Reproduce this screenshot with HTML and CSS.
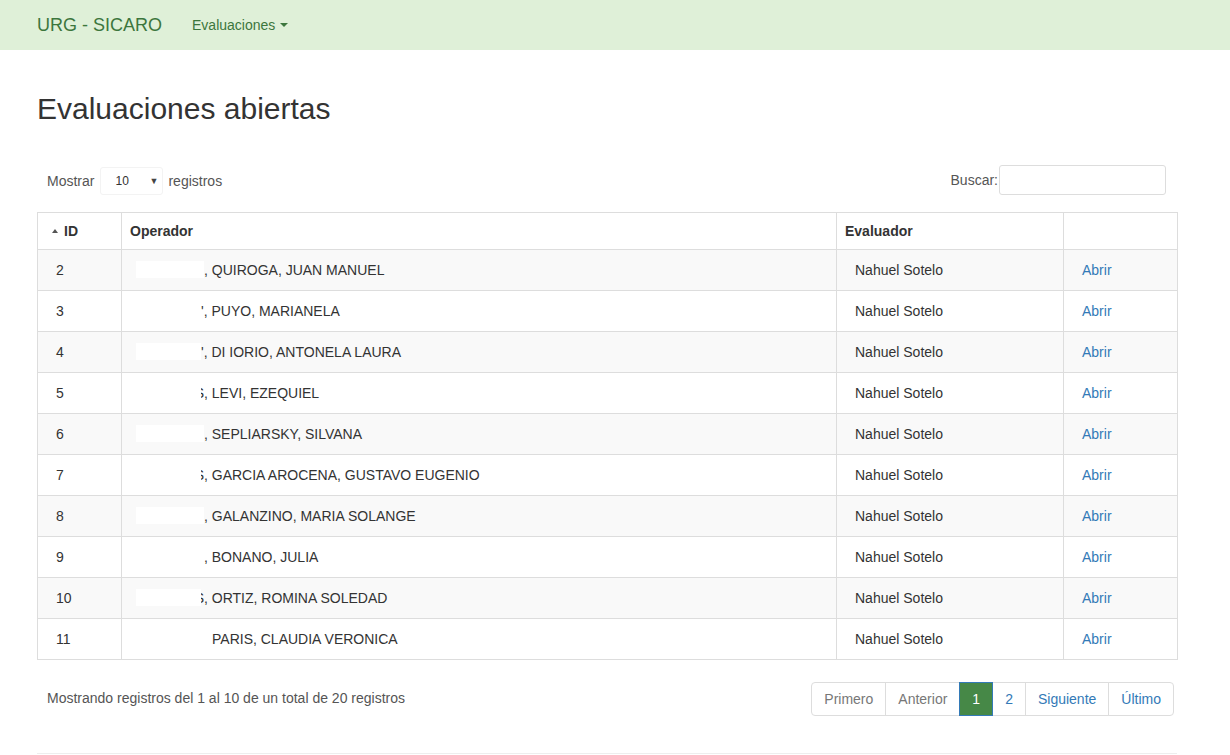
FILE: index.html
```html
<!DOCTYPE html>
<html lang="es">
<head>
<meta charset="utf-8">
<title>URG - SICARO</title>
<link rel="stylesheet" href="styles.css">
</head>
<body>
<nav class="navbar">
  <a class="brand" href="#">URG - SICARO</a>
  <a class="nav-link" href="#">Evaluaciones <span class="caret"></span></a>
</nav>
<main class="container">
  <h2 class="title">Evaluaciones abiertas</h2>
  <div class="controls">
    <div class="length">
      <span>Mostrar</span>
      <div class="select"><span>10</span><span class="sel-arrow">▼</span></div>
      <span>registros</span>
    </div>
    <label class="search">Buscar:<span class="search-input"></span></label>
  </div>
  <table class="grid">
    <colgroup>
      <col class="c-id"><col class="c-op"><col class="c-ev"><col class="c-ac">
    </colgroup>
    <thead>
      <tr>
        <th class="th-id"><span class="sort"></span>ID</th>
        <th>Operador</th>
        <th>Evaluador</th>
        <th></th>
      </tr>
    </thead>
    <tbody>
      <tr class="odd"><td>2</td><td><span class="rd"></span>, QUIROGA, JUAN MANUEL</td><td>Nahuel Sotelo</td><td><a href="#">Abrir</a></td></tr>
      <tr><td>3</td><td><span class="rd rd-a"></span>', PUYO, MARIANELA</td><td>Nahuel Sotelo</td><td><a href="#">Abrir</a></td></tr>
      <tr class="odd"><td>4</td><td><span class="rd rd-a"></span>', DI IORIO, ANTONELA LAURA</td><td>Nahuel Sotelo</td><td><a href="#">Abrir</a></td></tr>
      <tr><td>5</td><td><span class="rd rd-a"></span><span class="cut">S</span>, LEVI, EZEQUIEL</td><td>Nahuel Sotelo</td><td><a href="#">Abrir</a></td></tr>
      <tr class="odd"><td>6</td><td><span class="rd"></span>, SEPLIARSKY, SILVANA</td><td>Nahuel Sotelo</td><td><a href="#">Abrir</a></td></tr>
      <tr><td>7</td><td><span class="rd rd-a"></span><span class="cut">S</span>, GARCIA AROCENA, GUSTAVO EUGENIO</td><td>Nahuel Sotelo</td><td><a href="#">Abrir</a></td></tr>
      <tr class="odd"><td>8</td><td><span class="rd"></span>, GALANZINO, MARIA SOLANGE</td><td>Nahuel Sotelo</td><td><a href="#">Abrir</a></td></tr>
      <tr><td>9</td><td><span class="rd"></span>, BONANO, JULIA</td><td>Nahuel Sotelo</td><td><a href="#">Abrir</a></td></tr>
      <tr class="odd"><td>10</td><td><span class="rd rd-a"></span><span class="cut">S</span>, ORTIZ, ROMINA SOLEDAD</td><td>Nahuel Sotelo</td><td><a href="#">Abrir</a></td></tr>
      <tr><td>11</td><td><span class="rd rd-w"></span>PARIS, CLAUDIA VERONICA</td><td>Nahuel Sotelo</td><td><a href="#">Abrir</a></td></tr>
    </tbody>
  </table>
  <div class="footer-row">
    <div class="info">Mostrando registros del 1 al 10 de un total de 20 registros</div>
    <ul class="pagination">
      <li class="disabled"><a href="#">Primero</a></li>
      <li class="disabled"><a href="#">Anterior</a></li>
      <li class="active"><a href="#">1</a></li>
      <li><a href="#">2</a></li>
      <li><a href="#">Siguiente</a></li>
      <li><a href="#">Último</a></li>
    </ul>
  </div>
  <hr class="rule">
</main>
</body>
</html>
```
FILE: styles.css
```css
html, body {
  margin: 0;
  padding: 0;
  background: #fff;
}
body {
  font-family: "Liberation Sans", Arial, sans-serif;
  font-size: 14px;
  line-height: 20px;
  color: #333;
}
a {
  text-decoration: none;
}

.navbar {
  height: 50px;
  background: #dff0d8;
  display: flex;
  align-items: center;
  padding-left: 22px;
  box-sizing: border-box;
}
.brand {
  color: #3c763d;
  font-size: 18px;
  line-height: 20px;
  padding: 15px;
}
.nav-link {
  color: #3c763d;
  font-size: 14px;
  padding: 15px;
  display: flex;
  align-items: center;
}
.caret {
  display: inline-block;
  width: 0;
  height: 0;
  margin-left: 5px;
  border-top: 4px solid #3c763d;
  border-left: 4px solid transparent;
  border-right: 4px solid transparent;
}

.container {
  width: 1140px;
  margin-left: 37px;
}
.title {
  margin: 42px 0 0;
  font-size: 30px;
  line-height: 33px;
  font-weight: 500;
  color: #333;
}

.controls {
  display: flex;
  justify-content: space-between;
  align-items: center;
  margin-top: 40px;
  height: 30px;
  padding: 0 11px 0 10px;
}
.length {
  display: flex;
  align-items: center;
  color: #555;
  padding-top: 2px;
}
.select {
  width: 63px;
  height: 28px;
  box-sizing: border-box;
  border: 1px solid #f3f3f3;
  border-radius: 3px;
  margin: 0 5px 0 6px;
  display: flex;
  align-items: center;
  justify-content: space-between;
  padding: 0 4px 0 14px;
  font-size: 12px;
  color: #333;
}
.sel-arrow {
  font-size: 9px;
  color: #444;
}
.search {
  display: flex;
  align-items: center;
  color: #555;
}
.search-input {
  display: inline-block;
  width: 167px;
  height: 30px;
  box-sizing: border-box;
  border: 1px solid #ddd;
  border-radius: 3px;
  margin-left: 1px;
}

.grid {
  margin-top: 17px;
  width: 1140px;
  border-collapse: collapse;
  table-layout: fixed;
}
.c-id { width: 84px; }
.c-op { width: 715px; }
.c-ev { width: 227px; }
.c-ac { width: 114px; }
.grid th {
  text-align: left;
  font-weight: bold;
  padding: 8px 8px;
  border: 1px solid #ddd;
  line-height: 20px;
}
.grid .th-id {
  padding-left: 14px;
}
.sort {
  display: inline-block;
  width: 0;
  height: 0;
  border-bottom: 4px solid #555;
  border-left: 3px solid transparent;
  border-right: 3px solid transparent;
  margin-right: 6px;
  vertical-align: 3px;
}
.grid td {
  padding: 10px 18px;
  border: 1px solid #ddd;
  line-height: 20px;
  white-space: nowrap;
}
.grid tr.odd td {
  background: #f9f9f9;
}
.grid td a {
  color: #337ab7;
}
.rd {
  display: inline-block;
  width: 68px;
  margin-left: -4px;
  height: 17px;
  background: #fff;
  vertical-align: -3px;
}
.rd-a {
  width: 65px;
}
.rd-w {
  width: 76px;
}
.cut {
  display: inline-flex;
  justify-content: flex-end;
  width: 3px;
  overflow: hidden;
  vertical-align: top;
}

.footer-row {
  display: flex;
  justify-content: space-between;
  align-items: center;
  margin-top: 22px;
  padding: 0 3px 0 10px;
}
.info {
  color: #555;
  margin-top: -3px;
}
.pagination {
  display: flex;
  list-style: none;
  margin: 0;
  padding: 0;
}
.pagination li a {
  display: block;
  padding: 6px 12px;
  line-height: 20px;
  border: 1px solid #ddd;
  margin-left: -1px;
  color: #337ab7;
  background: #fff;
}
.pagination li:first-child a {
  margin-left: 0;
  border-radius: 4px 0 0 4px;
}
.pagination li:last-child a {
  border-radius: 0 4px 4px 0;
}
.pagination li.disabled a {
  color: #777;
}
.pagination li.active a {
  background: #468847;
  color: #fff;
  border-color: #337ab7;
  position: relative;
  z-index: 1;
}

.rule {
  margin: 37px 0 0;
  border: 0;
  border-top: 1px solid #eee;
}
```
